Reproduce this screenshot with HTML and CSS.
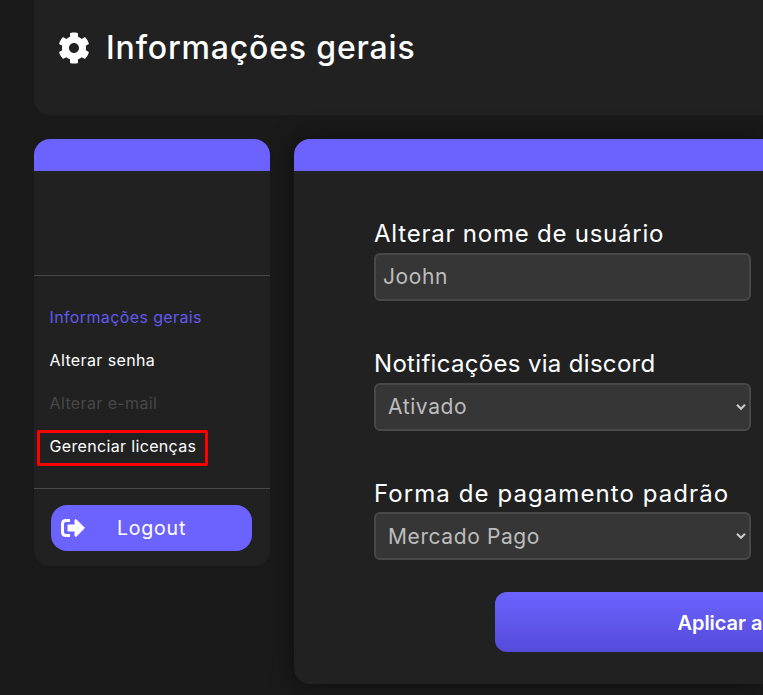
FILE: index.html
```html
<!DOCTYPE html>
<html lang="pt-BR">
<head>
<meta charset="utf-8">
<title>Informações gerais</title>
<link rel="stylesheet" href="styles.css">
</head>
<body>
<header class="page-header">
  <svg class="gear" viewBox="0 0 512 512"><path fill="currentColor" d="M487.400 315.700l-42.600-24.600c4.300-23.200 4.300-47 0-70.200l42.600-24.600c4.900-2.800 7.100-8.600 5.500-14-11.100-35.600-30-67.800-54.700-94.600-3.800-4.100-10-5.100-14.800-2.300L380.800 110c-17.900-15.400-38.500-27.300-60.800-35.100V25.800c0-5.600-3.900-10.500-9.400-11.700-36.700-8.200-74.300-7.800-109.200 0-5.500 1.200-9.400 6.100-9.400 11.700V75c-22.200 7.900-42.800 19.800-60.800 35.100L88.700 85.500c-4.900-2.800-11-1.900-14.800 2.300-24.700 26.700-43.600 58.900-54.700 94.600-1.700 5.400.6 11.200 5.500 14L67.300 221c-4.300 23.200-4.300 47 0 70.200l-42.600 24.600c-4.900 2.800-7.100 8.600-5.500 14 11.100 35.600 30 67.800 54.700 94.600 3.800 4.100 10 5.100 14.800 2.300l42.600-24.600c17.900 15.400 38.500 27.300 60.800 35.100v49.200c0 5.600 3.900 10.500 9.400 11.700 36.700 8.200 74.300 7.800 109.200 0 5.500-1.200 9.400-6.100 9.400-11.700v-49.200c22.200-7.900 42.800-19.800 60.800-35.100l42.600 24.600c4.900 2.800 11 1.900 14.800-2.300 24.700-26.700 43.600-58.900 54.700-94.600 1.500-5.500-.7-11.300-5.600-14.100zM256 336c-44.100 0-80-35.900-80-80s35.900-80 80-80 80 35.900 80 80-35.900 80-80 80z"/></svg>
  <h1 class="title"><span>Informações gerais</span></h1>
</header>
<div class="layout">
  <aside class="sidebar">
    <div class="strip"></div>
    <div class="profile"></div>
    <nav class="menu">
      <a class="item active"><span>Informações gerais</span></a>
      <a class="item"><span>Alterar senha</span></a>
      <a class="item disabled"><span>Alterar e-mail</span></a>
      <a class="item marked"><span>Gerenciar licenças</span></a>
    </nav>
    <div class="footer">
      <button class="logout">
        <svg class="exit" viewBox="0 0 24 18"><path d="M9 1.500H5Q1.500 1.500 1.500 5v8q0 3.500 3.500 3.500h4" fill="none" stroke="currentColor" stroke-width="3"/><path fill="currentColor" stroke="currentColor" stroke-linejoin="round" d="M7 6h7V.8h1.300L23.500 9l-8.200 8.200H14V12H7z"/></svg>
        <span class="logout-label">Logout</span>
      </button>
    </div>
  </aside>
  <main class="panel">
    <div class="strip"></div>
    <form class="form">
      <div class="field">
        <label class="label name-label"><span>Alterar nome de usuário</span></label>
        <div class="control text"><span>Joohn</span></div>
      </div>
      <div class="field">
        <label class="label notify-label"><span>Notificações via discord</span></label>
        <div class="control"><span>Ativado</span><svg class="chevron" viewBox="0 0 10 8"><path d="M1 1.800l4 4 4-4" fill="none" stroke="currentColor" stroke-width="2"/></svg></div>
      </div>
      <div class="field">
        <label class="label payment-label"><span>Forma de pagamento padrão</span></label>
        <div class="control last"><span>Mercado Pago</span><svg class="chevron" viewBox="0 0 10 8"><path d="M1 1.800l4 4 4-4" fill="none" stroke="currentColor" stroke-width="2"/></svg></div>
      </div>
      <button class="apply" type="button"><span>Aplicar a</span></button>
    </form>
  </main>
</div>
</body>
</html>
```
FILE: styles.css
```css
* { box-sizing: border-box; }
body {
  margin: 0;
  width: 763px;
  height: 695px;
  overflow: hidden;
  background: #1a1a1a;
  color: #fff;
  font-family: Inter, "Liberation Sans", sans-serif;
}
button { border: 0; font-family: inherit; color: inherit; text-align: left; }
span { white-space: nowrap; }
.page-header {
  display: flex;
  height: 115px;
  margin-left: 34px;
  padding: 32px 0 0 24px;
  background: #212121;
  border-bottom-left-radius: 16px;
}
.gear { width: 32px; height: 32px; flex: none; }
.title {
  margin: -4px 0 0 16px;
  font-size: 32px;
  line-height: 40px;
  font-weight: 500;
  letter-spacing: .83px;
}
.layout { display: flex; align-items: flex-start; gap: 24px; margin: 24px 0 0 34px; }
.sidebar { width: 236px; height: 427px; flex: none; background: #212121; border-radius: 16px; overflow: hidden; }
.strip { height: 32px; background: #6c63ff; }
.profile { height: 105px; border-bottom: 1px solid #484848; }
.menu { display: flex; flex-direction: column; height: 213px; padding: 20px 16px 0 15.500px; border-bottom: 1px solid #484848; }
.item { height: 43px; line-height: 43px; font-size: 16px; letter-spacing: .38px; }
.active { color: #6159ed; }
.disabled { color: #484848; }
.marked {
  width: 171px;
  height: 36px;
  margin: 5px 0 0 -12.500px;
  padding-left: 9.500px;
  line-height: 27px;
  border: 3px solid #f00;
  border-radius: 2px;
  letter-spacing: .34px;
}
.footer { padding: 16px 18px 0 17px; }
.logout { display: flex; align-items: center; width: 201px; height: 46px; padding: 0 0 0 10px; background: #6c63ff; border-radius: 16px; }
.exit { width: 24px; height: 18px; margin-right: 32px; }
.logout-label { font-size: 19.5px; letter-spacing: .8px; }
.panel { flex: 1; min-width: 0; height: 545px; background: #212121; border-radius: 16px 0 0 16px; box-shadow: 0 0 24px rgba(0,0,0,.5); }
.panel .strip { border-top-left-radius: 16px; }
.form { padding: 47px 0 0 80px; }
.field { height: 130px; }
.label { display: block; height: 35px; line-height: 31px; font-size: 24px; }
.name-label { letter-spacing: .77px; }
.notify-label { letter-spacing: .32px; }
.payment-label { letter-spacing: 1.08px; }
.control {
  display: flex;
  align-items: center;
  justify-content: space-between;
  width: 377px;
  height: 48px;
  padding: 0 3px 1px 12px;
  border: 2px solid #484848;
  border-radius: 6px;
  background: #363636;
  color: #bdbdbd;
  font-size: 21px;
  letter-spacing: .6px;
}
.text { padding-left: 7px; }
.last { margin-top: -1px; padding-bottom: 0; }
.chevron { width: 10px; height: 8px; color: #ccc; }
.apply {
  display: block;
  width: 268px;
  height: 60px;
  margin: -16px 0 0 121px;
  padding: 1px 0 0 182.500px;
  background: linear-gradient(#6c63ff, #544bd9);
  border-radius: 12px 0 0 12px;
  font-size: 20px;
  font-weight: 600;
  letter-spacing: -.05px;
}
```
